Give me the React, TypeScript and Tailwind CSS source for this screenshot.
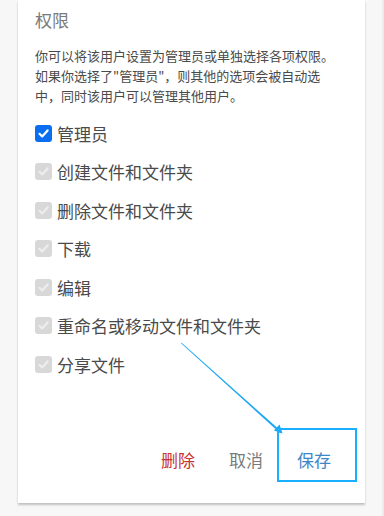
import React from 'react';

const font = { fontFamily: '"Noto Sans CJK SC", "Noto Sans", sans-serif' };

const permissions = [
  { label: '管理员', admin: true },
  { label: '创建文件和文件夹' },
  { label: '删除文件和文件夹' },
  { label: '下载' },
  { label: '编辑' },
  { label: '重命名或移动文件和文件夹' },
  { label: '分享文件' },
];

function CheckBox({ admin }: { admin?: boolean }) {
  return (
    <span
      className={
        'w-[17px] h-[17px] rounded-[3px] flex items-center justify-center flex-shrink-0 ' +
        (admin ? 'bg-[#0b6ef0]' : 'bg-[#d8d8d8]')
      }
    >
      <svg width="13" height="13" viewBox="0 0 13 13">
        <path
          d="M2.5 6.8 L5.2 9.4 L10.6 3.4"
          fill="none"
          stroke={admin ? '#ffffff' : '#ededed'}
          strokeWidth="2.2"
          strokeLinecap="round"
          strokeLinejoin="round"
        />
      </svg>
    </span>
  );
}

export default function App() {
  return (
    <div className="min-h-[516px] w-[384px] bg-[#f7f7f7] flex border-r-2 border-[#ececec]" style={font}>
      <div className="ml-[18px] w-[347px] mb-[13px] self-start">
        <div className="relative bg-white px-[17px] pt-[8px] pb-[25px] shadow-[0_2px_2px_rgba(0,0,0,0.22)]">
          <h2 className="text-[17px] leading-[24px] text-[#7a7a7a]">权限</h2>
          <p className="mt-[14px] text-[13px] leading-[20px] text-[#4a4a4a] pr-[10px]">
            你可以将该用户设置为管理员或单独选择各项权限。如果你选择了"管理员"，则其他的选项会被自动选中，同时该用户可以管理其他用户。
          </p>
          <div className="mt-[8px] flex flex-col">
            {permissions.map((p) => (
              <label key={p.label} className="h-[38.5px] flex items-center gap-[5px]">
                <CheckBox admin={p.admin} />
                <span className="text-[17px] text-[#4a4a4a] leading-none">{p.label}</span>
              </label>
            ))}
          </div>
          <div className="mt-[58px] flex justify-end">
            <button className="h-[36px] px-[17px] text-[17px] text-[#c8362f]">删除</button>
            <button className="h-[36px] px-[17px] text-[17px] text-[#7a7a7a]">取消</button>
            <button className="h-[36px] px-[17px] text-[17px] text-[#3d86c8]">保存</button>
          </div>

          <svg
            className="absolute inset-0 pointer-events-none"
            width="347"
            height="503"
            viewBox="0 0 347 503"
          >
            <polygon points="163,343.3 163.6,342.7 263.5,431.6 262.2,433.2" fill="#1aa7f2" />
            <polygon points="264.5,433.5 256,430.5 261.5,424.5" fill="#1aa7f2" />
            <rect x="260" y="429" width="78" height="52" fill="none" stroke="#1ab0ff" strokeWidth="2" />
          </svg>
        </div>
      </div>
    </div>
  );
}
